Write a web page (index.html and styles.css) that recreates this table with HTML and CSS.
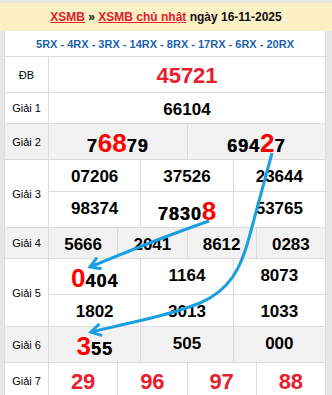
FILE: index.html
```html
<!DOCTYPE html>
<html lang="vi">
<head>
<meta charset="utf-8">
<link rel="stylesheet" href="styles.css">
</head>
<body>
<div class="page">
  <div class="head"><a class="lnk">XSMB</a> » <a class="lnk">XSMB chủ nhật</a> ngày 16-11-2025</div>
  <div class="box">
    <div class="codes">5RX - 4RX - 3RX - 14RX - 8RX - 17RX - 6RX - 20RX</div>
    <div class="tbl">
      <div class="row r36">
        <div class="lbl">ĐB</div>
        <div class="nums c1"><div class="cell db">45721</div></div>
      </div>
      <div class="row r31">
        <div class="lbl">Giải 1</div>
        <div class="nums c1"><div class="cell">66104</div></div>
      </div>
      <div class="row r36 alt">
        <div class="lbl">Giải 2</div>
        <div class="nums c2">
          <div class="cell"><span class="hv">7</span><span class="big">68</span><span class="hv">79</span></div>
          <div class="cell"><span class="hv">694</span><span class="big">2</span><span class="hv">7</span></div>
        </div>
      </div>
      <div class="row g3">
        <div class="lbl">Giải 3</div>
        <div class="nums c3">
          <div class="cell">07206</div>
          <div class="cell">37526</div>
          <div class="cell">23644</div>
          <div class="cell">98374</div>
          <div class="cell"><span class="hv">7830</span><span class="big">8</span></div>
          <div class="cell">53765</div>
        </div>
      </div>
      <div class="row r31 alt">
        <div class="lbl">Giải 4</div>
        <div class="nums c4">
          <div class="cell">5666</div>
          <div class="cell">2041</div>
          <div class="cell">8612</div>
          <div class="cell">0283</div>
        </div>
      </div>
      <div class="row g5">
        <div class="lbl">Giải 5</div>
        <div class="nums c3">
          <div class="cell"><span class="big">0</span><span class="hv">404</span></div>
          <div class="cell">1164</div>
          <div class="cell">8073</div>
          <div class="cell">1802</div>
          <div class="cell">3013</div>
          <div class="cell">1033</div>
        </div>
      </div>
      <div class="row r36 alt">
        <div class="lbl">Giải 6</div>
        <div class="nums c3">
          <div class="cell"><span class="big">3</span><span class="hv">55</span></div>
          <div class="cell">505</div>
          <div class="cell">000</div>
        </div>
      </div>
      <div class="row r36">
        <div class="lbl">Giải 7</div>
        <div class="nums c4">
          <div class="cell red">29</div>
          <div class="cell red">96</div>
          <div class="cell red">97</div>
          <div class="cell red">88</div>
        </div>
      </div>
    </div>
  </div>
  <svg class="arrows" width="332" height="395" viewBox="0 0 332 395">
    <defs>
      <marker id="ah" viewBox="0 0 14 14" refX="11" refY="7" markerWidth="14" markerHeight="14" markerUnits="userSpaceOnUse" orient="auto">
        <path d="M1,1 L11,7 L1,13" fill="none" stroke="#1a9fe0" stroke-width="3" stroke-linejoin="miter"/>
      </marker>
    </defs>
    <path d="M209,221 Q160,238 90,267" fill="none" stroke="#1a9fe0" stroke-width="3" marker-end="url(#ah)"/>
    <path d="M272,153 L249,238 C241,268 230,290 200,303 C170,315 130,323 91,332" fill="none" stroke="#1a9fe0" stroke-width="3" marker-end="url(#ah)"/>
  </svg>
</div>
</body>
</html>
```
FILE: styles.css
```css
* { box-sizing: border-box; }
html, body { margin: 0; padding: 0; }
body {
  background: #e6e6e6;
  font-family: "Liberation Sans", Arial, sans-serif;
  color: #000;
}
.page {
  position: relative;
  width: 332px;
  height: 395px;
  overflow: hidden;
  padding-top: 3px;
}
.head {
  height: 28px;
  line-height: 28px;
  background: #fcf0c5;
  text-align: center;
  font-size: 12px;
  font-weight: bold;
  color: #111;
}
.lnk {
  color: #e5202d;
  text-decoration: underline;
}
.box {
  margin-left: 4px;
  width: 322px;
  background: #fff;
  border-left: 1px solid #dcdcdc;
}
.codes {
  height: 26px;
  line-height: 26px;
  text-align: center;
  font-size: 11px;
  font-weight: bold;
  color: #1d62ad;
  border-right: 1px solid #dcdcdc;
  border-bottom: 1px solid #dcdcdc;
}
.row {
  display: grid;
  grid-template-columns: 44px 1fr;
}
.alt { background: #f2f2f2; }
.lbl {
  display: flex;
  align-items: center;
  justify-content: center;
  font-size: 11px;
  border-right: 1px solid #dcdcdc;
  border-bottom: 1px solid #dcdcdc;
}
.nums { display: grid; }
.c1 { grid-template-columns: 1fr; }
.c2 { grid-template-columns: repeat(2, 1fr); }
.c3 { grid-template-columns: repeat(3, 1fr); }
.c4 { grid-template-columns: repeat(4, 1fr); }
.r36 .nums { grid-auto-rows: 36px; }
.r31 .nums { grid-auto-rows: 31px; }
.g3 .nums { grid-template-rows: 32px 36px; }
.g5 .nums { grid-template-rows: 36px 32px; }
.cell {
  display: flex;
  align-items: baseline;
  justify-content: center;
  padding-top: 7px;
  font-size: 17px;
  font-weight: bold;
  line-height: 20px;
  border-right: 1px solid #dcdcdc;
  border-bottom: 1px solid #dcdcdc;
}
.db {
  font-size: 22px;
  color: #e8202d;
  line-height: 24px;
}
.red {
  font-size: 22px;
  color: #e8202d;
  line-height: 24px;
}
.big {
  font-size: 26px;
  color: #ff0000;
  line-height: 24px;
}
.hv {
  font-size: 18px;
  letter-spacing: 1px;
  text-shadow: 0.4px 0 0 #000;
}
.arrows {
  position: absolute;
  left: 0;
  top: 0;
  pointer-events: none;
}
```
